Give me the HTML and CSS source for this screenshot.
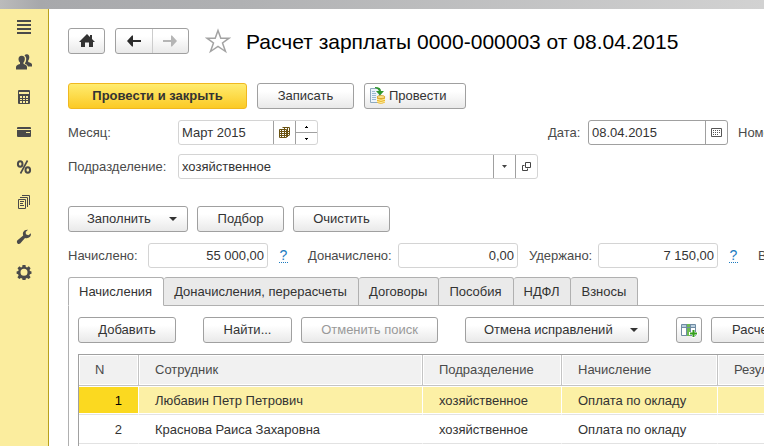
FILE: index.html
```html
<!DOCTYPE html>
<html lang="ru">
<head>
<meta charset="utf-8">
<title>Расчет зарплаты</title>
<link rel="stylesheet" href="styles.css">
</head>
<body>
<div class="topbar"></div>
<div class="app">
  <nav class="sidebar" aria-label="Разделы">
    <a href="#" aria-label="Главное"><svg width="16" height="16" viewBox="0 0 16 16"><path d="M1 1h14v2H1zM1 5h14v2H1zM1 9h14v2H1zM1 13h14v2H1z"/></svg></a>
    <a href="#" aria-label="Сотрудники"><svg width="16" height="16" viewBox="0 0 16 16"><path d="M8.500 1.500Q9.500 0 11 .2Q13.500.5 13.300 3.500Q13.200 5.500 12.200 6.500V8Q15.800 8.800 16 10.500V12.500H12Q11.500 10.500 8.800 9.800Q10.500 7.500 10.200 4.500Q10 2.500 8.500 1.500Z"/><path d="M5.500 1.800Q9.200 1.700 8.800 5.500Q8.600 7.500 7.500 8.500V10Q11 10.800 11 13V15.500H0V13Q.2 10.800 4 10V8.500Q2.500 7.500 2.500 5.200Q2.500 2 5.500 1.800Z"/></svg></a>
    <a href="#" aria-label="Расчеты"><svg width="16" height="16" viewBox="0 0 16 16"><path fill-rule="evenodd" d="M3 1h10q1 0 1 1v12q0 1-1 1H3q-1 0-1-1V2q0-1 1-1zM3 3v2h10V3zM4 7v2h2V7zM7 7v2h2V7zM10 7v2h2V7zM4 10v1h2v-1zM7 10v1h2v-1zM10 10v1h2v-1zM4 12v2h2v-2zM7 12v2h2v-2zM10 12v2h2v-2z"/></svg></a>
    <a href="#" aria-label="Выплаты"><svg width="16" height="16" viewBox="0 0 16 16"><path fill-rule="evenodd" d="M2 3h12q1 0 1 1v1H1V4q0-1 1-1zM1 6h14v6q0 1-1 1H2q-1 0-1-1zM10 8v1h4V8z"/></svg></a>
    <a href="#" aria-label="Налоги"><svg width="16" height="16" viewBox="0 0 16 16" fill="none" stroke="#4a4a4a"><ellipse cx="4.200" cy="5" rx="2.300" ry="2.800" stroke-width="2"/><ellipse cx="11.800" cy="11" rx="2.300" ry="2.800" stroke-width="2"/><path d="M11.500 1.500L4.500 14.500" stroke-width="1.600"/></svg></a>
    <a href="#" aria-label="Отчеты"><svg width="16" height="16" viewBox="0 0 16 16" fill="none" stroke="#4a4a4a"><path d="M2.500 5.500h7v9h-7zM4 3.500h7.500V13M6 1.500h7.500V11M4 7.500h4M4 9.500h3M4 11.500h4"/></svg></a>
    <a href="#" aria-label="Настройка"><svg width="16" height="16" viewBox="0 0 16 16"><path d="M12 .8Q8.500.5 7.200 3Q6.500 4.700 7.200 6.500L1.200 11.500Q.3 13 1.500 14.400Q2.800 15.500 4.200 14.500L9 8.900Q12 9.700 14 7.700Q15.200 6.300 15 4.200L12.300 6.200L9.900 5.300L9.700 3Z"/></svg></a>
    <a href="#" aria-label="Администрирование"><svg width="16" height="16" viewBox="0 0 16 16"><path fill-rule="evenodd" d="M6.500 1h3l.3 2 1.300.5 1.700-1.200 1.800 1.900-1.100 1.700.5 1.200 1.500.3v2.400l-1.600.4-.5 1.300 1.200 1.700-1.900 1.900-1.700-1.200-1.200.5-.3 1.600h-3l-.3-1.600-1.300-.5-1.600 1.200-1.900-1.900 1.200-1.700-.5-1.300L.6 9.800V7.400l1.600-.3.5-1.200-1.200-1.700 1.900-1.900L5 3.500 6.200 3zM8 4.800A3.500 3.500 0 1 0 8 11.800A3.500 3.500 0 1 0 8 4.800z"/></svg></a>
  </nav>

  <main class="main">
    <header class="titlebar">
      <button class="btn home" aria-label="Начальная страница"><svg width="16" height="14" viewBox="0 0 16 14" fill="#333"><path d="M8 0L11 3V1h2v4l3 3h-2v5H10V8.500H6V13H2V8H0z"/></svg></button>
      <div class="history">
        <button aria-label="Назад"><svg width="14" height="12" viewBox="0 0 14 12" fill="#2b2b2b"><path d="M0 6L5 0.500H6V5H14v2H6v4.500H5z"/></svg></button>
        <button aria-label="Вперед" disabled><svg width="14" height="12" viewBox="0 0 14 12" fill="#b5b5b5"><path d="M14 6L9 0.500H8V5H0v2H8v4.500H9z"/></svg></button>
      </div>
      <button class="star" aria-label="В избранное"><svg width="26" height="26" viewBox="0 0 26 26" fill="#fff" stroke="#a3a3a3" stroke-width="1.500"><path d="M13 2.500L15.800 10.200H24L17.500 15L20.500 23.500L13 18.500L5.500 23.500L8.500 15L2 10.200H10.200Z"/></svg></button>
      <h1>Расчет зарплаты 0000-000003 от 08.04.2015</h1>
    </header>

    <div class="actions">
      <button class="btn primary">Провести и закрыть</button>
      <button class="btn w97">Записать</button>
      <button class="btn post"><svg width="17" height="18" viewBox="0 0 17 18"><path d="M1.500 1.500h9v14h-9z" fill="#edf4fa" stroke="#8ea9bf"/><path d="M3 4.500h3M3 6.500h4M3 8.500h4M3 10.500h4M3 12.500h4" stroke="#9bb9d1"/><path d="M6 0Q12 0 12 4h3l-4 4.500L7 4h3Q9 1.500 6 1z" fill="#2f962c"/><path d="M8 10v5.500q3.500 2.500 8 0V10z" fill="#eab62d"/><ellipse cx="12" cy="10" rx="4" ry="1.500" fill="#ffe388" stroke="#c9931a" stroke-width=".7"/><path d="M8 12.300q4 2 8 0M8 14.500q4 2 8 0" fill="none" stroke="#fff0a5"/></svg>Провести</button>
    </div>

    <div class="row">
      <label class="lead" for="month">Месяц:</label>
      <div class="field month">
        <input id="month" value="Март 2015">
        <button aria-label="Выбрать месяц"><svg width="11" height="11" viewBox="0 0 11 11" fill="none" stroke="#6b5312"><path d="M3.500.500h7v8M.500 2.500h7v8h-7zM2.500 2v8M5.500 2v8M0 4.500h10M0 6.500h10M0 8.500h10M5.500 0v3M8.500 0v10"/></svg></button>
        <div class="spin">
          <button aria-label="Следующий"><svg width="3" height="2" viewBox="0 0 3 2"><path d="M1 0h1v1h1v1H0V1h1z"/></svg></button>
          <button aria-label="Предыдущий"><svg width="3" height="2" viewBox="0 0 3 2"><path d="M0 0h3v1H2v1H1V1H0z"/></svg></button>
        </div>
      </div>
      <label class="date-label" for="date">Дата:</label>
      <div class="field date">
        <input id="date" value="08.04.2015">
        <button aria-label="Календарь"><svg width="11" height="9" viewBox="0 0 11 9" fill="none" stroke="#555"><path d="M.500.500h10v8H.500z"/><path d="M2 2.500h7M2 4.500h7M2 6.500h5" stroke-dasharray="1 1"/></svg></button>
      </div>
      <span class="number-label">Номер:</span>
    </div>

    <div class="row">
      <label class="lead" for="dept">Подразделение:</label>
      <div class="field dept">
        <input id="dept" value="хозяйственное">
        <button aria-label="Выбрать"><svg width="5" height="3" viewBox="0 0 5 3" fill="#444"><path d="M0 0h5L2.500 3z"/></svg></button>
        <button aria-label="Открыть"><svg width="9" height="9" viewBox="0 0 9 9" fill="none" stroke="#444"><path d="M3.500.500h5v5h-5zM2.500 3.500h-2v5h5v-2"/></svg></button>
      </div>
    </div>

    <div class="actions fill">
      <button class="btn drop w120">Заполнить<i class="caret"></i></button>
      <button class="btn w87">Подбор</button>
      <button class="btn w97">Очистить</button>
    </div>

    <div class="row totals">
      <label class="l-accrued" for="accrued">Начислено:</label>
      <div class="field sum"><input id="accrued" value="55 000,00"></div>
      <a class="help" href="#">?</a>
      <label class="l-extra" for="extra">Доначислено:</label>
      <div class="field sum"><input id="extra" value="0,00"></div>
      <label class="l-held" for="held">Удержано:</label>
      <div class="field sum"><input id="held" value="7 150,00"></div>
      <a class="help" href="#">?</a>
      <span>Взносы:</span>
    </div>

    <div class="tabs" role="tablist">
      <button role="tab" aria-selected="true">Начисления</button>
      <button role="tab">Доначисления, перерасчеты</button>
      <button role="tab">Договоры</button>
      <button role="tab">Пособия</button>
      <button role="tab">НДФЛ</button>
      <button role="tab">Взносы</button>
    </div>

    <section class="panel">
      <div class="toolbar">
        <button class="btn w98">Добавить</button>
        <button class="btn w89 group">Найти...</button>
        <button class="btn w137" disabled>Отменить поиск</button>
        <button class="btn drop w184 group">Отмена исправлений<i class="caret"></i></button>
        <button class="btn tool group" aria-label="Показать колонки"><svg width="17" height="15" viewBox="0 0 17 15"><path d="M.500 1.500h14v11H.500z" fill="#fff" stroke="#6f8ba3"/><path d="M1 2h13v2H1z" fill="#b9cede"/><path d="M5 1h4v12H5z" fill="#6dbb51"/><path d="M.500 4.500h14M5.500 1v12M9.500 1v12" stroke="#6f8ba3"/><path d="M11 6h3v3h3v3h-3v3h-3v-3H8V9h3z" fill="#fff"/><path d="M11.500 7h2v2.500H16v2h-2.500V14h-2v-2.500H9v-2h2.500z" fill="#35a01d"/></svg></button>
        <button class="btn calc">Расчетный листок</button>
      </div>
      <table>
        <colgroup><col class="c-n"><col class="c-name"><col class="c-dept"><col class="c-kind"><col class="c-result"></colgroup>
        <thead><tr><th>N</th><th>Сотрудник</th><th>Подразделение</th><th>Начисление</th><th>Результат</th></tr></thead>
        <tbody>
          <tr class="selected"><td>1</td><td>Любавин Петр Петрович</td><td>хозяйственное</td><td>Оплата по окладу</td><td></td></tr>
          <tr><td>2</td><td>Краснова Раиса Захаровна</td><td>хозяйственное</td><td>Оплата по окладу</td><td></td></tr>
          <tr><td></td><td></td><td></td><td></td><td></td></tr>
        </tbody>
      </table>
    </section>
  </main>
</div>
</body>
</html>
```
FILE: styles.css
```css
* { box-sizing: border-box; }
body {
  margin: 0;
  height: 100vh;
  display: flex;
  flex-direction: column;
  overflow: hidden;
  background: #fff;
  color: #333;
  font: 13px/16px "Liberation Sans", Arial, sans-serif;
}
button, input { font: inherit; color: inherit; }
button { padding: 0; border: 0; background: none; }
svg { display: block; flex: none; }

.topbar { flex: none; height: 9px; background: linear-gradient(90deg, #bbb 0, #a7a8ab 40px, #b0b1b3 240px, #d2d2d2 100%); }
.app { flex: 1; min-height: 0; display: flex; }

.sidebar {
  flex: none;
  width: 49px;
  border-right: 1px solid #b8a11c;
  background: #fbed9e;
}
.sidebar a { display: flex; height: 35px; align-items: center; justify-content: center; }
.sidebar svg { fill: #4a4a4a; }
.sidebar svg[fill="none"] { fill: none; }

.main { flex: 1; min-width: 0; overflow: hidden; padding: 19px 0 0 19px; white-space: nowrap; }

.btn {
  display: flex;
  flex: none;
  align-items: center;
  justify-content: center;
  height: 26px;
  border: 1px solid #a0a0a0;
  border-radius: 3px;
  background: linear-gradient(#fff 30%, #e9e9e9);
}
.btn:disabled { color: #999; }
.primary {
  width: 179px;
  border-color: #f0b820;
  background: linear-gradient(#ffec70, #fbca25);
  font-weight: bold;
}
.post { width: 102px; gap: 3px; justify-content: flex-start; padding-left: 4px; }
.w87 { width: 87px; }
.w89 { width: 89px; }
.w97 { width: 97px; }
.w98 { width: 98px; }
.w120 { width: 120px; }
.w137 { width: 137px; }
.w184 { width: 184px; }
.drop { justify-content: space-between; padding: 0 10px 0 18px; }
.caret { border: 4px solid transparent; border-top-color: #333; border-bottom: 0; }

.titlebar { display: flex; align-items: center; height: 26px; }
.home { width: 37px; }
.history {
  display: flex;
  flex: none;
  width: 74px;
  height: 26px;
  margin-left: 10px;
  border: 1px solid #a0a0a0;
  border-radius: 3px;
  background: linear-gradient(#fff 30%, #e9e9e9);
}
.history button { flex: 1; display: flex; align-items: center; justify-content: center; }
.history button + button { border-left: 1px solid #ccc; }
.star { margin-left: 16px; }
h1 { margin: 0 0 0 15px; color: #000; font-size: 21px; line-height: 24px; font-weight: normal; padding-top: 2px; }

.actions { display: flex; gap: 10px; margin: 29px 0 11px; }
.fill { gap: 9px; margin: 27px 0 11px; }

.row { display: flex; align-items: center; height: 25px; color: #4a4a4a; }
.row > * { flex: none; }
.row + .row { margin-top: 9px; }
.lead { width: 110px; }
.field {
  display: flex;
  height: 25px;
  border: 1px solid #d4d4d4;
  border-radius: 3px;
  background: #fff;
  color: #333;
}
.field input { flex: 1; min-width: 0; padding: 0 3px; border: 0; outline: 0; background: none; }
.field > button { width: 22px; display: flex; align-items: center; justify-content: center; border-left: 1px solid #a0a0a0; }
.month { width: 140px; }
.spin { width: 22px; display: flex; flex-direction: column; border-left: 1px solid #a0a0a0; }
.spin button { flex: 1; display: flex; align-items: center; justify-content: center; }
.spin button + button { border-top: 1px solid #a0a0a0; }
.date-label { width: 40px; margin-left: 230px; }
.date { width: 140px; border-color: #a0a0a0; }
.number-label { margin-left: 10px; }
.dept { width: 360px; }

.sum { width: 120px; }
.sum input { text-align: right; }
.l-accrued { width: 80px; }
.l-extra { width: 90px; }
.l-held { width: 80px; padding-left: 11px; }
.help {
  width: 9px;
  margin: 0 20px 0 11px;
  border-bottom: 1px dotted #1a7abf;
  color: #1a7abf;
  font-size: 14px;
  line-height: 14px;
  text-align: center;
  text-decoration: none;
}

.tabs { display: flex; margin-top: 9px; border-bottom: 1px solid #b0b0b0; }
.tabs button {
  height: 29px;
  margin-bottom: -1px;
  padding: 0 11px 0 10px;
  border: 1px solid #b0b0b0;
  border-left-width: 0;
  border-radius: 3px 3px 0 0;
  background: #eaeaea;
}
.tabs [aria-selected="true"] { border-left-width: 1px; border-bottom-color: #fff; background: #fff; }

.panel { padding: 11px 0 0 9px; border-left: 1px solid #b0b0b0; }
.toolbar { display: flex; gap: 9px; margin-bottom: 11px; }
.group { margin-left: 18px; }
.tool { width: 26px; }
.calc { padding: 0 20px; }

table {
  width: 100%;
  min-width: 780px;
  table-layout: fixed;
  border-collapse: separate;
  border-spacing: 0;
  border: 1px solid #a0a0a0;
}
.c-n { width: 60px; }
.c-name { width: 284px; }
.c-dept { width: 139px; }
.c-kind { width: 156px; }
th, td { height: 29px; padding: 0 16px; overflow: hidden; text-align: left; font-weight: normal; }
th {
  height: 31px;
  border-right: 1px solid #c4c4c4;
  border-bottom: 1px solid #c4c4c4;
  background: #f1f1f1;
  box-shadow: inset 0 0 0 1px #fff;
  color: #4a4a4a;
}
td { padding-top: 2px; border-right: 1px solid #fff; border-bottom: 1px solid #e2e2e2; }
td:first-child { text-align: right; }
.selected td { background: #fcf0a5; box-shadow: inset 0 1px #fff, inset 0 -1px #fff; }
.selected td:first-child { background: #fbd920; color: #000; }
```
